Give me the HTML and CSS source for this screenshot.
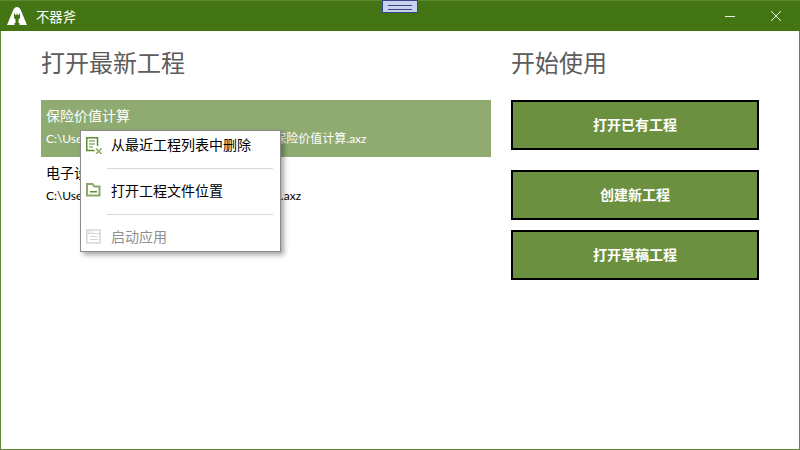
FILE: index.html
```html
<!DOCTYPE html>
<html lang="zh-CN">
<head>
    <meta charset="UTF-8">
    <meta name="viewport" content="width=device-width, initial-scale=1.0">
    <title>不器斧</title>
    <link rel="stylesheet" href="styles.css">
</head>
<body>
    <div class="window">
        <header class="titlebar">
            <svg class="logo" width="20" height="20" viewBox="0 0 20 20">
                <path fill="#fff" d="M10 1 C8 1 7 2.500 6 4.500 L0 19 H7.500 V17 H12.500 V19 H20 L14 4.500 C13 2.500 12 1 10 1 Z"/>
                <path fill="#437514" d="M7 7.500 H8 V9 H9.500 V7.500 H10.500 V9 H12 V7.500 H13 V12 L11.500 13.500 V19 H8.500 V13.500 L7 12 Z"/>
            </svg>
            <span class="app-name">不器斧</span>
            <div class="window-controls">
                <svg width="12" height="12" viewBox="0 0 12 12"><path stroke="#e6eedd" stroke-width="1" d="M1 6.500 H11"/></svg>
                <svg width="12" height="12" viewBox="0 0 12 12"><path stroke="#e6eedd" stroke-width="1" d="M1 1 L11 11 M11 1 L1 11"/></svg>
            </div>
        </header>

        <main class="content">
            <section class="recent">
                <h1>打开最新工程</h1>
                <ul class="project-list">
                    <li class="project selected">
                        <div class="project-name">保险价值计算</div>
                        <div class="project-path">C:\Users\Administrator\document\不器斧\保险价值计算.axz</div>
                    </li>
                    <li class="project">
                        <div class="project-name">电子设备</div>
                        <div class="project-path">C:\Users\Administrator\document\电子设备.axz</div>
                    </li>
                </ul>
            </section>
            <section class="start">
                <h1>开始使用</h1>
                <div class="actions">
                    <button class="action first">打开已有工程</button>
                    <button class="action">创建新工程</button>
                    <button class="action">打开草稿工程</button>
                </div>
            </section>
        </main>

        <div class="context-menu">
            <div class="menu-item">
                <svg width="18" height="18" viewBox="0 0 18 18" fill="none">
                    <path stroke="#5f8a32" stroke-width="1.500" d="M9.500 14.500 H1.750 V1.750 H12.500 V10"/>
                    <path stroke="#5f8a32" d="M4 5 H10 M4 8 H10 M4 11 H8"/>
                    <path stroke="#8aa86a" stroke-width="1.500" d="M11 12.500 L16.500 18 M16.500 12.500 L11 18"/>
                </svg>
                <span>从最近工程列表中删除</span>
            </div>
            <div class="menu-sep"></div>
            <div class="menu-item">
                <svg width="18" height="18" viewBox="0 0 18 18" fill="none">
                    <path stroke="#8aa86a" stroke-width="2" d="M2 2 H7.500 L9.500 4.500 H14.500 V13.500 H2 Z"/>
                    <path stroke="#5f8a32" stroke-width="1.500" d="M5 9.750 H12"/>
                </svg>
                <span>打开工程文件位置</span>
            </div>
            <div class="menu-sep"></div>
            <div class="menu-item disabled">
                <svg width="18" height="18" viewBox="0 0 18 18" fill="none">
                    <path stroke="#d6d6d6" stroke-width="1.500" d="M1.750 2 H15 V15 H1.750 Z"/>
                    <path stroke="#d6d6d6" d="M2 5.500 H15 M4 2 V5 M7 2 V5 M5 8.500 H12 M5 11.500 H13"/>
                </svg>
                <span>启动应用</span>
            </div>
        </div>

        <div class="drag-handle"></div>
    </div>
</body>
</html>
```

FILE: styles.css
```css
* {
    box-sizing: border-box;
}

body {
    margin: 0;
    width: 800px;
    height: 450px;
    overflow: hidden;
    font-family: Lato, "Noto Sans CJK SC", sans-serif;
    background: #ffffff;
}

.window {
    position: relative;
    height: 450px;
    border: 1px solid #5f8a32;
    border-top: 0;
    background: #ffffff;
}

.titlebar {
    display: flex;
    align-items: center;
    height: 31px;
    margin: 0 -1px;
    padding-left: 7px;
    background: #437514;
    border-top: 1px solid #5f8a32;
    color: #ffffff;
}

.logo {
    flex: none;
}

.app-name {
    margin-left: 9px;
    font-size: 13.33px;
}

.window-controls {
    display: flex;
    align-items: center;
    gap: 34px;
    margin-left: auto;
    padding-right: 18px;
}

.window-controls svg {
    display: block;
}

.content {
    display: flex;
    gap: 20px;
    padding: 0 0 0 40px;
}

.recent {
    width: 450px;
}

.start {
    width: 248px;
}

h1 {
    margin: 0;
    height: 69px;
    padding-top: 15px;
    font-size: 24px;
    line-height: 33px;
    font-weight: 400;
    color: #5c5c5c;
}

.project-list {
    margin: 0;
    padding: 0;
    list-style: none;
}

.project {
    height: 57px;
    padding: 6px 5px;
    color: #000000;
}

.project.selected {
    background: #8fab72;
    color: #ffffff;
}

.project-name {
    font-size: 14px;
    line-height: 20px;
}

.project-path {
    margin-top: 4px;
    font-size: 12px;
    line-height: 18px;
    white-space: nowrap;
}

.actions {
    display: flex;
    flex-direction: column;
    gap: 10px;
}

.action {
    height: 50px;
    padding: 0 0 3px;
    border: 2px solid #000000;
    background: #6b9140;
    color: #ffffff;
    font-family: inherit;
    font-size: 14px;
    font-weight: 700;
}

.action.first {
    margin-bottom: 10px;
}

.context-menu {
    position: absolute;
    left: 79px;
    top: 130px;
    width: 201px;
    height: 122px;
    padding: 0 7px 0 4px;
    border: 1px solid #8a8a8a;
    background: #ffffff;
    box-shadow: 3px 3px 5px rgba(0, 0, 0, 0.35);
}

.menu-item {
    display: flex;
    align-items: center;
    gap: 8px;
    height: 30px;
    font-size: 14px;
    color: #000000;
}

.menu-item:first-child {
    margin-top: -1px;
}

.menu-item span {
    position: relative;
    top: -1px;
}

.menu-item svg {
    flex: none;
    display: block;
}

.menu-item.disabled {
    color: #8f8f8f;
}

.menu-sep {
    height: 1px;
    margin: 8px 0 7px 22px;
    background: #d8d8d8;
}

.drag-handle {
    position: absolute;
    left: 381px;
    top: 0;
    width: 36px;
    height: 13px;
    border: 1px solid #37477f;
    background: #c9d3f0;
}

.drag-handle::after {
    content: "";
    display: block;
    height: 3px;
    margin: 4px 5px 0;
    border-top: 1px solid #37477f;
    border-bottom: 1px solid #37477f;
}
```
